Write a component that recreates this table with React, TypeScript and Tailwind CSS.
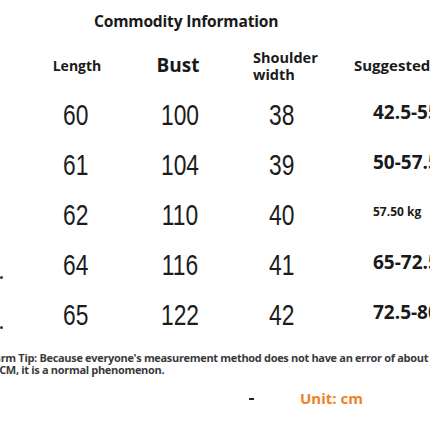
const rows = [
  { len: "60", bust: "100", sh: "38", sug: "42.5-55", small: false },
  { len: "61", bust: "104", sh: "39", sug: "50-57.5", small: false },
  { len: "62", bust: "110", sh: "40", sug: "57.50 kg", small: true },
  { len: "64", bust: "116", sh: "41", sug: "65-72.5", small: false },
  { len: "65", bust: "122", sh: "42", sug: "72.5-80", small: false },
];

const label = "font-['Open_Sans',sans-serif] font-bold text-[#1a1a1a]";
const num =
  "inline-block scale-x-[0.76] font-['Liberation_Sans',sans-serif] text-[30px] leading-none text-[#1c1c1c]";

export default function App() {
  return (
    <div className="w-[430px] h-[430px] bg-white overflow-hidden">
      <div className={`${label} text-[15.6px] pt-[10px] pl-[94px] tracking-[-0.2px]`}>
        Commodity Information
      </div>

      <div className="grid grid-cols-[100px_104px_104px_96px] pl-[26px] mt-[12px] items-center h-[40px]">
        <div className={`${label} text-[14px] text-center pl-[2px]`}>Length</div>
        <div className={`${label} text-[19px] text-center`}>Bust</div>
        <div className={`${label} text-[14.5px] leading-[17px] pl-[23px] mt-[1px]`}>
          Shoulder
          <br />
          width
        </div>
        <div className={`${label} text-[15px] pl-[20px] whitespace-nowrap`}>Suggested</div>
      </div>

      <div className="relative mt-[5px]">
        {rows.map((r, i) => (
          <div
            key={r.len}
            className="grid grid-cols-[100px_104px_104px_96px] pl-[26px] h-[50px] items-center"
          >
            <div className="text-center">
              <span className={num}>{r.len}</span>
            </div>
            <div className="text-center pl-[4px]">
              <span className={num}>{r.bust}</span>
            </div>
            <div className="text-center">
              <span className={num}>{r.sh}</span>
            </div>
            <div
              className={`${label} whitespace-nowrap pl-[39px] -mt-[6px] ${
                r.small ? "text-[12px]" : "text-[19px]"
              }`}
            >
              {r.sug}
            </div>
            {i >= 3 && (
              <span
                className="absolute left-0 w-[3px] h-[3px] bg-[#333] rounded-full"
                style={{ top: i * 50 + 36 }}
              />
            )}
          </div>
        ))}
      </div>

      <div className="mt-[12px] -ml-[16px] w-[470px] font-['Open_Sans',sans-serif] font-bold text-[11px] leading-[12px] text-[#3a3a3a] tracking-[-0.32px] whitespace-nowrap">
        Warm Tip: Because everyone's measurement method does not have an error of about
        <br />
        1-3CM, it is a normal phenomenon.
      </div>

      <div className="flex items-center mt-[11px]">
        <span className="ml-[249px] w-[5px] h-[2px] bg-[#222]" />
        <span className="ml-[46px] font-['Open_Sans',sans-serif] font-bold text-[15px] text-[#f08224]">
          Unit: cm
        </span>
      </div>
    </div>
  );
}
